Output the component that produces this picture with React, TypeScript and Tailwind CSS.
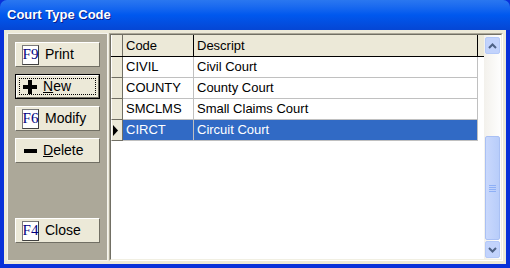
import React from 'react';

const rows = [
  { code: 'CIVIL', desc: 'Civil Court' },
  { code: 'COUNTY', desc: 'County Court' },
  { code: 'SMCLMS', desc: 'Small Claims Court' },
  { code: 'CIRCT', desc: 'Circuit Court', selected: true },
];

const FKey = ({ k }: { k: string }) => (
  <span className="w-[17px] h-[20px] bg-white border border-[#7a7a7a] border-r-[#404040] border-b-[#404040] flex items-center justify-center text-[15px] leading-none text-[#000080] font-['Liberation_Serif',serif]">
    {k}
  </span>
);

const Btn = ({ children, def }: { children: React.ReactNode; def?: boolean }) => (
  <div className={`w-[85px] h-[25px] ${def ? 'border border-black' : ''}`}>
    <div className="w-full h-full bg-[#ece9d8] border border-white border-r-[#716f64] border-b-[#716f64] flex items-center pl-[6px] gap-[6px] text-[14px] text-black relative">
      {children}
      {def && <div className="absolute inset-[2px] border border-dotted border-black pointer-events-none" />}
    </div>
  </div>
);

const Chevron = ({ up }: { up?: boolean }) => (
  <svg width="9" height="6" viewBox="0 0 9 6">
    <path d={up ? 'M1 5 L4.5 1.5 L8 5' : 'M1 1 L4.5 4.5 L8 1'} stroke="#4d6185" strokeWidth="2" fill="none" />
  </svg>
);

export default function App() {
  return (
    <div className="w-[510px] h-[268px] flex flex-col font-['Liberation_Sans',Arial,sans-serif] overflow-hidden bg-[#0831d9]">
      {/* title bar */}
      <div className="h-[30px] shrink-0 rounded-t-[7px] bg-gradient-to-b from-[#2a77f0] via-[#0058ee] to-[#0546d4] flex items-center pl-[7px]">
        <span className="text-white font-bold text-[13px] [text-shadow:1px_1px_0_#0a1e8c]">Court Type Code</span>
      </div>
      {/* client */}
      <div className="flex-1 mx-[4px] mb-[4px] bg-[#ece9d8] flex p-[3px] gap-[1px] min-h-0">
        {/* left panel */}
        <div className="w-[101px] h-full border border-[#f5f4ee] bg-[#aca899] flex flex-col pl-[7px] pt-[8px] pb-[17px]">
          <div className="flex flex-col gap-[7px]">
            <Btn><FKey k="F9" />Print</Btn>
            <Btn def>
              <svg width="14" height="14" viewBox="0 0 14 14"><path d="M5 0h4v5h5v4H9v5H5V9H0V5h5z" fill="#000" /></svg>
              <span><span className="underline">N</span>ew</span>
            </Btn>
            <Btn><FKey k="F6" />Modify</Btn>
            <Btn>
              <span className="w-[13px] h-[4px] bg-black ml-[2px]" />
              <span><span className="underline">D</span>elete</span>
            </Btn>
          </div>
          <div className="mt-auto"><Btn><FKey k="F4" />Close</Btn></div>
        </div>
        {/* grid */}
        <div className="flex-1 h-full border border-[#aca899] border-r-white border-b-white flex">
          <div className="flex-1 h-full border border-[#716f64] border-r-[#f1efe2] border-b-[#f1efe2] bg-white flex text-[13px] text-black">
            <div className="flex-1 flex flex-col">
              <div className="flex h-[22px] bg-[#ece9d8] border-b border-black">
                <div className="w-[12px] border-r border-[#716f64] border-l border-l-white" />
                <div className="w-[71px] border-r border-black pl-[3px] flex items-center">Code</div>
                <div className="w-[284px] border-r border-black pl-[3px] flex items-center">Descript</div>
              </div>
              {rows.map((r) => (
                <div key={r.code} className="flex h-[21px]">
                  <div className="w-[12px] bg-[#ece9d8] border-r border-b border-[#716f64] border-l border-l-white flex items-center">
                    {r.selected && (
                      <svg width="7" height="11" viewBox="0 0 7 11"><path d="M1 0 L6 5.5 L1 11z" fill="#000" /></svg>
                    )}
                  </div>
                  <div className={`w-[71px] border-r border-b border-[#c0c0c0] pl-[3px] flex items-center ${r.selected ? 'bg-[#316ac5] text-white' : ''}`}>{r.code}</div>
                  <div className={`w-[284px] border-r border-b border-[#c0c0c0] pl-[3px] flex items-center ${r.selected ? 'bg-[#316ac5] text-white' : ''}`}>{r.desc}</div>
                </div>
              ))}
            </div>
            {/* scrollbar */}
            <div className="w-[17px] h-full bg-gradient-to-r from-[#f3f1ec] to-[#fefefe] flex flex-col p-[1px] pt-[2px] gap-[1px]">
              <div className="h-[17px] rounded-[2px] bg-[#c2d3fc] border border-[#b4c9f8] flex items-center justify-center"><Chevron up /></div>
              <div className="flex-1 flex flex-col">
                <div className="h-[81px]" />
                <div className="flex-1 rounded-[2px] bg-gradient-to-r from-[#c9d8fc] to-[#b8cdfa] border border-[#a9c0f4] flex items-center justify-center">
                  <div className="flex flex-col gap-[1px]">
                    <div className="w-[7px] h-[1px] bg-[#8eb0f6]" />
                    <div className="w-[7px] h-[1px] bg-[#8eb0f6]" />
                    <div className="w-[7px] h-[1px] bg-[#8eb0f6]" />
                    <div className="w-[7px] h-[1px] bg-[#8eb0f6]" />
                  </div>
                </div>
              </div>
              <div className="h-[17px] rounded-[2px] bg-[#c2d3fc] border border-[#b4c9f8] flex items-center justify-center"><Chevron /></div>
            </div>
          </div>
        </div>
      </div>
    </div>
  );
}
